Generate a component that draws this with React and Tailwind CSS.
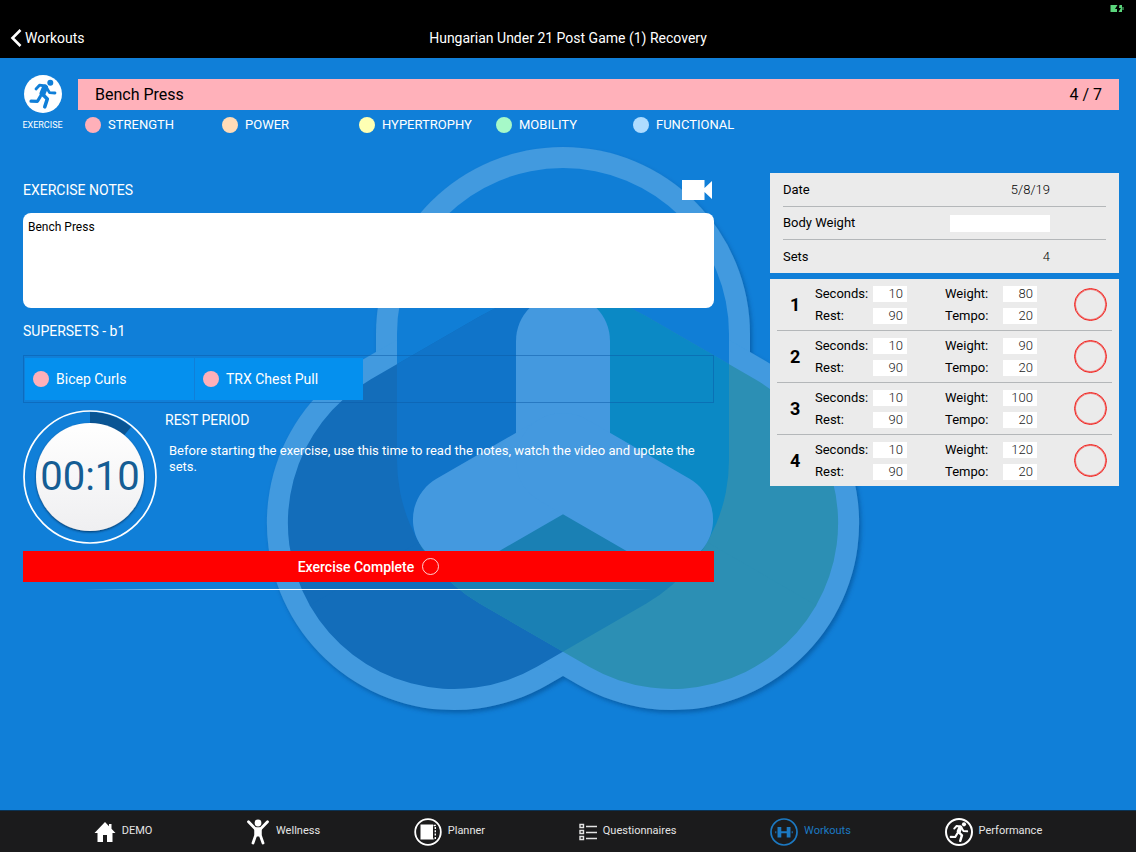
import React from "react";

const TAGS = [
  ["STRENGTH", "bg-[#ffb0b9]"],
  ["POWER", "bg-[#ffdcb8]"],
  ["HYPERTROPHY", "bg-[#feffb3]"],
  ["MOBILITY", "bg-[#a6f9c8]"],
  ["FUNCTIONAL", "bg-[#aedcff]"],
];

const SETS = [
  { n: 1, seconds: 10, rest: 90, weight: 80, tempo: 20 },
  { n: 2, seconds: 10, rest: 90, weight: 90, tempo: 20 },
  { n: 3, seconds: 10, rest: 90, weight: 100, tempo: 20 },
  { n: 4, seconds: 10, rest: 90, weight: 120, tempo: 20 },
];

// Three overlapping petals around a centre at (297, 313), each sector
// between two arms showing only the pair of petals that meet there.
function Emblem() {
  const petal = { x: 131, y: 21, width: 332, height: 458, rx: 166 };
  const outer = { x: 110, y: 0, width: 374, height: 500, rx: 187 };
  const arm = { x: 250, y: 147, width: 94, height: 213, rx: 47 };
  const left = "rotate(240 297 313)";
  const right = "rotate(120 297 313)";
  return (
    <svg
      aria-hidden="true"
      className="pointer-events-none absolute top-[89px] left-1/2 -ml-[302px] overflow-visible"
      width="594"
      height="564"
      viewBox="0 0 594 564"
    >
      <defs>
        <clipPath id="topPetal"><rect {...petal} /></clipPath>
        <clipPath id="rightPetal"><rect {...petal} transform={right} /></clipPath>
        <clipPath id="sectorLeft"><path d="M298 313V-200H-300L-136 563Z" /></clipPath>
        <clipPath id="sectorRight"><path d="M296 313V-200H894L730 563Z" /></clipPath>
        <clipPath id="sectorBottom"><path d="M297 312L-136 562L297 900L730 562Z" /></clipPath>
        <filter id="soft" x="-10%" y="-10%" width="120%" height="120%">
          <feDropShadow dx="2" dy="3" stdDeviation="2" floodColor="#04437f" floodOpacity="0.5" />
        </filter>
      </defs>
      <g fill="#429adf" filter="url(#soft)">
        <rect {...outer} />
        <rect {...outer} transform={left} />
        <rect {...outer} transform={right} />
      </g>
      <g clipPath="url(#sectorLeft)">
        <rect {...petal} fill="#107ed6" />
        <rect {...petal} transform={left} fill="#136dba" />
        <g clipPath="url(#topPetal)">
          <rect {...petal} transform={left} fill="#1074c9" />
        </g>
      </g>
      <g clipPath="url(#sectorRight)">
        <rect {...petal} fill="#107ed6" />
        <rect {...petal} transform={right} fill="#2c8fb4" />
        <g clipPath="url(#topPetal)">
          <rect {...petal} transform={right} fill="#0b89c5" />
        </g>
      </g>
      <g clipPath="url(#sectorBottom)">
        <rect {...petal} transform={left} fill="#136dba" />
        <rect {...petal} transform={right} fill="#2c8fb4" />
        <g clipPath="url(#rightPetal)">
          <rect {...petal} transform={left} fill="#1a80b4" />
        </g>
      </g>
      <g fill="#4499df">
        <rect {...arm} />
        <rect {...arm} transform={left} />
        <rect {...arm} transform={right} />
      </g>
    </svg>
  );
}

function Runner({ className }) {
  return (
    <svg aria-hidden="true" className={className} viewBox="0 0 38 38" fill="none" stroke="currentColor" strokeLinecap="round" strokeLinejoin="round">
      <circle cx="26.300" cy="7.800" r="3" fill="currentColor" stroke="none" />
      <path d="M12 14L15.500 10.200L21.500 11" strokeWidth="2.800" />
      <path d="M21 12.500L18.500 18.500" strokeWidth="6" />
      <path d="M22.500 12.500L25.500 17.600L31 18" strokeWidth="2.800" />
      <path d="M18.300 19L23.300 24L20.800 31.800" strokeWidth="3.600" />
      <path d="M16.300 21.500L13.500 26.300L7 26.200" strokeWidth="3.200" />
    </svg>
  );
}

function Dot({ color }) {
  return <span className={"size-4 shrink-0 rounded-full " + color} />;
}

function Field({ label, value }) {
  return (
    <label className="flex items-center justify-between leading-5">
      <span>{label}</span>
      <input
        defaultValue={value}
        className="h-4 w-[34px] bg-white pr-1 text-right text-[13px] font-light text-[#222] outline-none"
      />
    </label>
  );
}

function SetRow({ set, last }) {
  return (
    <li className={"flex h-[51px] items-center pr-[5px] pl-[13px] " + (last ? "" : "box-content border-b border-[#b4b7b9]")}>
      <span className="w-[25px] text-lg font-bold">{set.n}</span>
      <div className="flex w-[92px] flex-col gap-[2px]">
        <Field label="Seconds:" value={set.seconds} />
        <Field label="Rest:" value={set.rest} />
      </div>
      <div className="ml-[38px] flex w-[92px] flex-col gap-[2px]">
        <Field label="Weight:" value={set.weight} />
        <Field label="Tempo:" value={set.tempo} />
      </div>
      <button
        type="button"
        aria-label={"Mark set " + set.n + " done"}
        className="ml-auto size-[33px] rounded-full border border-[#f2201c] ring-1 ring-[#f2201c]/60 ring-inset"
      />
    </li>
  );
}

function HomeIcon() {
  return (
    <svg width="22" height="22" viewBox="0 0 22 22" fill="#fff">
      <path d="M11 1L0.500 12H3.500V21H9V14H13V21H18.500V12H21.500L17.500 7.800V3H15V5.200Z" />
    </svg>
  );
}

function WellnessIcon() {
  return (
    <svg width="24" height="26" viewBox="0 0 24 26" fill="none" stroke="#fff" strokeWidth="2.800" strokeLinecap="round" strokeLinejoin="round">
      <circle cx="12" cy="4" r="3.400" fill="#fff" stroke="none" />
      <path d="M2.500 2.800L9.500 10H14.500L21.500 2.800" />
      <path d="M9.800 10V16L7 24M14.200 10V16L17 24" />
      <path d="M10 10H14V16H10Z" fill="#fff" />
    </svg>
  );
}

function PlannerIcon() {
  return (
    <svg width="28" height="28" viewBox="0 0 28 28" fill="none" stroke="#fff">
      <circle cx="14" cy="14" r="12.800" strokeWidth="1.800" />
      <rect x="6.500" y="6.500" width="12.500" height="15" fill="#fff" stroke="none" />
      <path d="M19.500 7.500H21.300V21H19.500" strokeWidth="1.400" strokeDasharray="2 1.300" />
    </svg>
  );
}

function ListIcon() {
  return (
    <svg width="18" height="18" viewBox="0 0 18 18" fill="none" stroke="#e4e4e4" strokeWidth="1.400">
      <path d="M1 1.500H4.500V4.500H1ZM1 7.500H4.500V10.500H1ZM1 13.500H4.500V16.500H1Z" />
      <path d="M7 3.500H18M7 9.500H18M7 15.500H18" />
    </svg>
  );
}

function WorkoutIcon() {
  return (
    <svg width="28" height="28" viewBox="0 0 28 28" fill="#1c79c2">
      <circle cx="14" cy="14" r="13" fill="none" stroke="#1c79c2" strokeWidth="1.700" />
      <path d="M7.500 9H11.300V13.200H16.700V9H20.500V19.500H16.700V15.300H11.300V19.500H7.500ZM5.300 13.200H6.300V15.200H5.300ZM21.700 13.200H22.700V15.200H21.700Z" />
    </svg>
  );
}

function PerformanceIcon() {
  return (
    <span className="flex size-7 items-center justify-center rounded-full border-2 border-white text-white">
      <Runner className="size-[26px] shrink-0" />
    </span>
  );
}

const NAV = [
  ["DEMO", HomeIcon],
  ["Wellness", WellnessIcon],
  ["Planner", PlannerIcon],
  ["Questionnaires", ListIcon],
  ["Workouts", WorkoutIcon],
  ["Performance", PerformanceIcon],
];

function Timer() {
  return (
    <div className="relative flex size-[134px] shrink-0 items-center justify-center">
      <svg aria-hidden="true" className="absolute inset-0" width="134" height="134" viewBox="0 0 134 134">
        <defs>
          <linearGradient id="face" x1="0" y1="0" x2="0" y2="1">
            <stop offset="0" stopColor="#ffffff" />
            <stop offset="1" stopColor="#efeff1" />
          </linearGradient>
          <filter id="faceShadow" x="-10%" y="-10%" width="120%" height="120%">
            <feDropShadow dx="0" dy="1.200" stdDeviation="0.900" floodColor="#022c55" floodOpacity="0.800" />
          </filter>
        </defs>
        <path d="M67 67V2A65 65 0 0 1 108 17Z" fill="#0a5594" />
        <circle cx="67" cy="67" r="66" fill="none" stroke="#fff" strokeWidth="1.700" />
        <circle cx="67" cy="67" r="54" fill="url(#face)" filter="url(#faceShadow)" />
      </svg>
      <time className="relative text-[40px] leading-none text-[#155d94]">00:10</time>
    </div>
  );
}

export default function App() {
  return (
    <div className="flex min-h-screen flex-col bg-[#107fd8] font-['Roboto',sans-serif] text-white">
      <header className="relative flex h-[58px] items-end bg-black pb-2">
        <a href="#workouts" className="flex h-6 items-center pl-[10px] text-sm">
          <svg width="12" height="20" viewBox="0 0 12 20" fill="none" stroke="#fff" strokeWidth="2.600">
            <path d="M10.500 2L2.500 10L10.500 18" />
          </svg>
          <span className="ml-[3px]">Workouts</span>
        </a>
        <h1 className="absolute inset-x-0 bottom-2 mx-auto w-fit text-sm leading-6">
          Hungarian Under 21 Post Game (1) Recovery
        </h1>
        <svg aria-hidden="true" className="absolute top-[5px] right-3" width="14" height="7" viewBox="0 0 14 7" fill="#5bd67c">
          <path d="M0.500 0H7.500L5 4H7V7H0.500ZM9.500 0H12V7H8.500L11 3H9ZM12.500 2H13.500V5H12.500Z" />
        </svg>
      </header>

      <main className="relative flex-1 overflow-hidden pr-[17px] pb-8 pl-[23px]">
        <Emblem />
        <section className="relative flex gap-4 pt-[17px]">
          <div className="flex w-[39px] flex-col items-center">
            <span className="flex size-[38px] items-center justify-center rounded-full bg-white text-[#107fd8]">
              <Runner className="size-[38px]" />
            </span>
            <span className="mt-1 text-[9px] leading-4">EXERCISE</span>
          </div>
          <div className="flex-1 pt-1">
            <div className="flex h-[31px] items-center justify-between bg-[#ffb1ba] px-[17px] text-base text-black">
              <h2>Bench Press</h2>
              <span>4 / 7</span>
            </div>
            <ul className="mt-[5px] flex pl-[7px] text-[13px] leading-5">
              {TAGS.map(([name, color]) => (
                <li key={name} className="flex w-[137px] items-center gap-[7px]">
                  <Dot color={color} />
                  {name}
                </li>
              ))}
            </ul>
          </div>
        </section>

        <div className="relative mt-[38px] flex items-start gap-14">
          <div className="flex-1">
            <div className="flex h-[34px] items-center justify-between text-sm">
              <h3>
                <label htmlFor="notes">EXERCISE NOTES</label>
              </h3>
              <button type="button" aria-label="Play video" className="mr-[2px]">
                <svg width="30" height="20" viewBox="0 0 30 20" fill="#fff">
                  <path d="M0 0H22.500V8L30 1V19L22.500 12V20H0Z" />
                </svg>
              </button>
            </div>
            <textarea
              id="notes"
              defaultValue="Bench Press"
              className="mt-[6px] block h-[95px] w-full resize-none rounded-lg bg-white px-[5px] py-1 text-xs leading-5 text-black outline-none"
            />
            <h3 className="mt-[13px] text-sm leading-5">SUPERSETS - b1</h3>
            <div className="mt-[14px] flex h-12 gap-px border border-[#0a5aa5]/50 py-[2px] pl-px">
              <button type="button" className="flex w-[169px] items-center gap-[7px] bg-[#0590ee] pl-2 text-sm">
                <Dot color="bg-[#ffb0b9]" />
                Bicep Curls
              </button>
              <button type="button" className="flex w-[168px] items-center gap-[7px] bg-[#0590ee] pl-2 text-sm">
                <Dot color="bg-[#ffb0b9]" />
                TRX Chest Pull
              </button>
            </div>
            <div className="mt-[7px] flex gap-2">
              <Timer />
              <div>
                <h3 className="text-sm leading-5">REST PERIOD</h3>
                <p className="mt-[13px] pl-1 text-[13px] leading-4">
                  Before starting the exercise, use this time to read the notes, watch the video and update the sets.
                </p>
              </div>
            </div>
            <button
              type="button"
              className="mt-[7px] flex h-[31px] w-full items-center justify-center gap-2 bg-[#ff0000] text-sm font-medium"
            >
              Exercise Complete
              <span className="size-[17px] rounded-full border border-white/80" />
            </button>
            <div className="mx-[60px] mt-[7px] h-px bg-[linear-gradient(to_right,transparent,white_25%,white_75%,transparent)]" />
          </div>

          <aside className="w-[349px] text-[13px] text-black">
            <dl className="bg-[#ebebeb] px-[13px] pt-px">
              <div className="flex h-[33px] items-center justify-between border-b border-[#b4b7b9] pr-[56px]">
                <dt>Date</dt>
                <dd className="font-light">5/8/19</dd>
              </div>
              <div className="flex h-[33px] items-center justify-between border-b border-[#b4b7b9] pr-[56px]">
                <dt>
                  <label htmlFor="body-weight">Body Weight</label>
                </dt>
                <dd>
                  <input id="body-weight" className="block h-[17px] w-[100px] bg-white px-1 outline-none" />
                </dd>
              </div>
              <div className="flex h-[33px] items-center justify-between pr-[56px]">
                <dt>Sets</dt>
                <dd className="font-light">4</dd>
              </div>
            </dl>
            <ol className="mt-[6px] bg-[#ebebeb] px-[7px]">
              {SETS.map((set, i) => (
                <SetRow key={set.n} set={set} last={i === SETS.length - 1} />
              ))}
            </ol>
          </aside>
        </div>
      </main>

      <nav className="flex h-[42px] items-center justify-evenly border-t border-[#0a3355] bg-[#1b1b1c] text-[11px]">
        {NAV.map(([name, Icon]) => (
          <a
            key={name}
            href={"#" + name.toLowerCase()}
            className={"flex items-center gap-[6px] " + (name === "Workouts" ? "text-[#1c79c2]" : "text-[#e4e4e4]")}
          >
            <Icon />
            {name}
          </a>
        ))}
      </nav>
    </div>
  );
}
